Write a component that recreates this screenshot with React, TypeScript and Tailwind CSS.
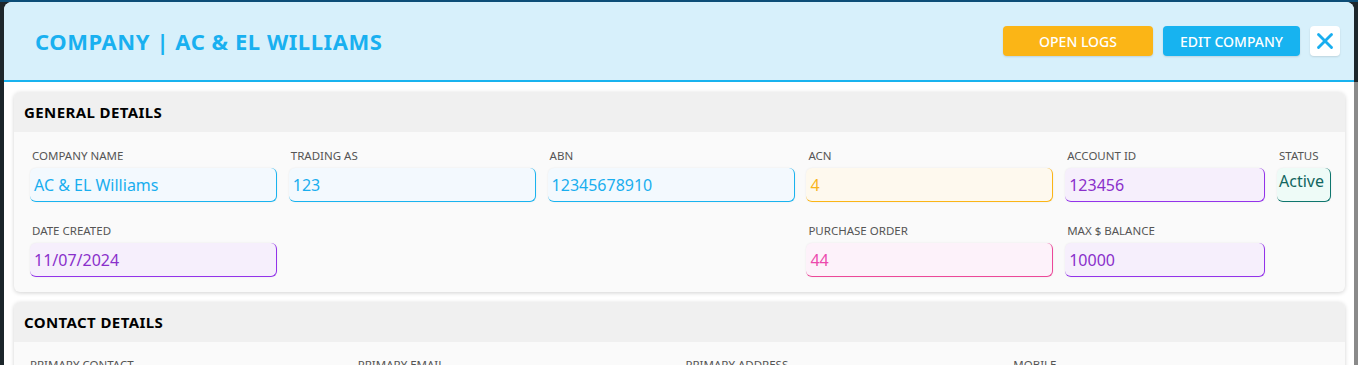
import { X } from "lucide-react";

type Tone = "blue" | "yellow" | "purple" | "pink" | "teal";

const tones: Record<Tone, string> = {
    blue: "bg-[#f3f9fe] text-[#19aeef] border-[#19b3ef]",
    yellow: "bg-[#fef9ee] text-[#f9b51c] border-[#fbb516]",
    purple: "bg-[#f6effc] text-[#8a2fcb] border-[#9333ea]",
    pink: "bg-[#fdf2fa] text-[#ec4aad] border-[#ec4899]",
    teal: "bg-[#eefbf7] text-[#12665f] border-[#0f766e]",
};

const generalRow1: { label: string; value: string; tone: Tone }[] = [
    { label: "Company Name", value: "AC & EL Williams", tone: "blue" },
    { label: "Trading As", value: "123", tone: "blue" },
    { label: "ABN", value: "12345678910", tone: "blue" },
    { label: "ACN", value: "4", tone: "yellow" },
    { label: "Account ID", value: "123456", tone: "purple" },
];

function Label({ children }: { children: React.ReactNode }) {
    return <div className="h-[13px] pl-[2px] text-[11.5px] leading-[13px] uppercase text-[#555]">{children}</div>;
}

function Field({ label, value, tone }: { label: string; value: string; tone: Tone }) {
    return (
        <div className="flex flex-col">
            <Label>{label}</Label>
            <div
                className={`mt-[6px] flex h-[34px] items-center rounded-[6px] border-r border-b pl-[4px] text-[16px] shadow-[0_0_2px_rgba(0,0,0,0.08)] ${tones[tone]}`}
            >
                {value}
            </div>
        </div>
    );
}

function Card({ title, children }: { title: string; children: React.ReactNode }) {
    return (
        <div className="overflow-hidden rounded-[6px] bg-[#fafafa] shadow-[0_1px_4px_rgba(0,0,0,0.18)]">
            <div className="flex h-[40px] items-center bg-[#f0f0f0] px-[10px] text-[15px] font-bold tracking-[0.4px] text-black">
                {title}
            </div>
            {children}
        </div>
    );
}

export default function App() {
    return (
        <div
            className="h-[365px] overflow-hidden bg-[#1c262b]"
            style={{ fontFamily: '"Noto Sans", "Open Sans", sans-serif' }}
        >
            <div className="h-[2px] bg-[#0c4d77]" />
            <div className="flex">
                <div className="w-[4px]" />
                <div className="flex-1 overflow-hidden rounded-t-[8px] bg-white">
                    {/* Header */}
                    <div className="flex h-[80px] items-center justify-between border-b-2 border-[#19b3ef] bg-[#d7f0fb] pl-[31px] pr-[14px]">
                        <h1 className="text-[22px] font-bold tracking-[0.55px] text-[#19b0f0]">COMPANY | AC &amp; EL WILLIAMS</h1>
                        <div className="flex items-center">
                            <button className="h-[30px] w-[150px] rounded-[4px] bg-[#fbb516] text-[14px] font-medium text-white shadow-[0_1px_2px_rgba(0,0,0,0.12)]">
                                OPEN LOGS
                            </button>
                            <button className="ml-[10px] h-[30px] w-[137px] rounded-[4px] bg-[#17b3f0] text-[14px] font-medium text-white shadow-[0_1px_2px_rgba(0,0,0,0.12)]">
                                EDIT COMPANY
                            </button>
                            <button className="ml-[10px] flex h-[30px] w-[30px] items-center justify-center rounded-[4px] bg-white shadow-[0_1px_2px_rgba(0,0,0,0.12)]">
                                <X size={26} strokeWidth={2.6} className="text-[#19aeef]" />
                            </button>
                        </div>
                    </div>

                    {/* Body */}
                    <div className="flex flex-col gap-[10px] pb-4 pl-[10px] pr-[9px] pt-[10px]">
                        <Card title="GENERAL DETAILS">
                            <div className="grid grid-cols-[247px_247px_247px_247px_200px_54px] gap-x-[11.8px] gap-y-[22px] pb-[15px] pl-[16px] pt-[17px]">
                                {generalRow1.map((f) => (
                                    <Field key={f.label} {...f} />
                                ))}
                                <div className="flex flex-col">
                                    <Label>Status</Label>
                                    <div className="mt-[6px] h-[34px] rounded-[6px] border-r border-b border-[#0f766e] bg-[#eefbf7] pl-[2px] pt-[2px] text-[16px] leading-[22px] text-[#12665f] shadow-[0_0_2px_rgba(0,0,0,0.08)]">
                                        Active
                                    </div>
                                </div>
                                <Field label="Date Created" value="11/07/2024" tone="purple" />
                                <div />
                                <div />
                                <Field label="Purchase Order" value="44" tone="pink" />
                                <Field label="Max $ Balance" value="10000" tone="purple" />
                                <div />
                            </div>
                        </Card>
                        <Card title="CONTACT DETAILS">
                            <div className="grid grid-cols-4 gap-x-[12px] pl-[16px] pr-[16px] pt-[16px]">
                                {["Primary Contact", "Primary Email", "Primary Address", "Mobile"].map((l) => (
                                    <div key={l} className="h-[60px] text-[11.5px] leading-[13px] uppercase text-[#555]">
                                        {l}
                                    </div>
                                ))}
                            </div>
                        </Card>
                    </div>
                </div>
                <div className="w-[4px] pt-[80px]">
                    <div className="h-[300px] bg-[#8a8a8a]" />
                </div>
            </div>
        </div>
    );
}
